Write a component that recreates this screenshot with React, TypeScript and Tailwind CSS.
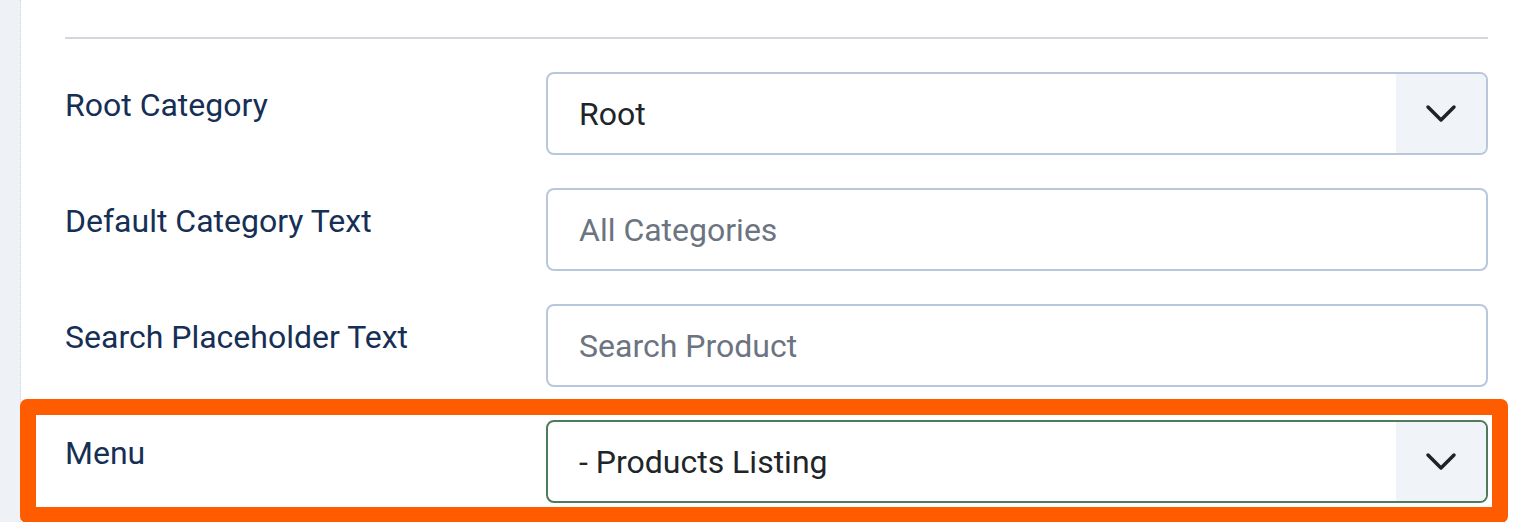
import React from "react";

function Chevron() {
  return (
    <svg width="32" height="20" viewBox="0 0 32 20" fill="none">
      <path d="M3 3 L16 16 L29 3" stroke="#1f2328" strokeWidth="3.5" strokeLinecap="round" strokeLinejoin="round" />
    </svg>
  );
}

function SelectBox({ value, green }: { value: string; green?: boolean }) {
  return (
    <div
      className={
        "flex h-[83px] w-full overflow-hidden rounded-[8px] border-2 bg-white " +
        (green ? "border-[#4c7c59]" : "border-[#b9c7de]")
      }
    >
      <div className="flex flex-1 items-center pl-[31px] text-[32px] text-[#212529]">{value}</div>
      <div className="flex w-[90px] items-center justify-center bg-[#f0f3f7]">
        <Chevron />
      </div>
    </div>
  );
}

function TextBox({ placeholder }: { placeholder: string }) {
  return (
    <div className="flex h-[83px] w-full items-center rounded-[8px] border-2 border-[#b9c7de] bg-white pl-[31px] text-[32px] text-[#6b7480]">
      {placeholder}
    </div>
  );
}

function Row({ label, children }: { label: string; children: React.ReactNode }) {
  return (
    <div className="flex">
      <div className="w-[481px] shrink-0 pt-[13px] text-[32px] leading-[40px] text-[#162f55]">{label}</div>
      <div className="flex-1">{children}</div>
    </div>
  );
}

export default function App() {
  return (
    <div
      className="flex h-[522px] w-[1528px] overflow-hidden bg-white"
      style={{ fontFamily: "Roboto, 'Liberation Sans', sans-serif" }}
    >
      <div className="w-[21px] shrink-0 border-r border-dotted border-[#cfd6df] bg-[#eef2f6]" />
      <div className="flex-1 pl-[44px] pr-[40px]">
        <div className="mt-[37px] h-[2px] bg-[#d2d7dd]" />
        <div className="mt-[33px] flex flex-col gap-[33px]">
          <Row label="Root Category">
            <SelectBox value="Root" />
          </Row>
          <Row label="Default Category Text">
            <TextBox placeholder="All Categories" />
          </Row>
          <Row label="Search Placeholder Text">
            <TextBox placeholder="Search Product" />
          </Row>
          <div className="relative">
            <Row label="Menu">
              <SelectBox value="- Products Listing" green />
            </Row>
            <div className="pointer-events-none absolute left-[-45px] right-[-20px] top-[-21px] h-[124px] rounded-[7px] border-[16px] border-[#ff5c00]" />
          </div>
        </div>
      </div>
    </div>
  );
}
